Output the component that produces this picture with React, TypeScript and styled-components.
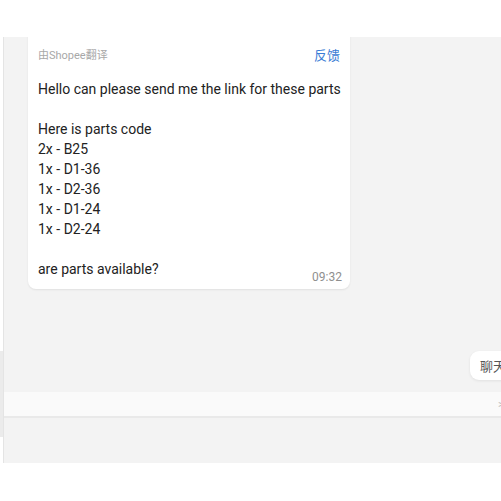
import React from "react";
import styled, { createGlobalStyle } from "styled-components";

const GlobalStyle = createGlobalStyle`
  html, body { margin: 0; padding: 0; background: #ffffff; }
  body { font-family: Roboto, "Noto Sans CJK SC", "Liberation Sans", sans-serif; }
`;

const Page = styled.div`
  width: 501px;
  height: 501px;
  display: flex;
  flex-direction: column;
  background: #ffffff;
  overflow: hidden;
`;

const TopBar = styled.div`
  height: 37px;
  flex: none;
  background: #ffffff;
`;

const Body = styled.div`
  display: flex;
  height: 426px;
  flex: none;
`;

const LeftRail = styled.div`
  width: 3px;
  flex: none;
  display: flex;
  flex-direction: column;
  padding-top: 314px;
`;

const RailMark = styled.div`
  height: 86px;
  background: #ebebeb;
`;

const ChatPanel = styled.div`
  flex: 1;
  display: flex;
  flex-direction: column;
  background: #f3f3f3;
  border-left: 1px solid #e4e4e4;
  overflow: hidden;
`;

const MessageArea = styled.div`
  height: 314px;
  flex: none;
  display: flex;
  flex-direction: column;
  justify-content: flex-end;
  overflow: hidden;
  padding: 0 0 62px 24px;
  box-sizing: border-box;
`;

const Bubble = styled.div`
  width: 322px;
  flex: none;
  box-sizing: border-box;
  background: #ffffff;
  border-radius: 8px;
  box-shadow: 0 1px 2px rgba(0, 0, 0, 0.08);
  padding: 10px 9px 5px 10px;
  display: flex;
  flex-direction: column;
`;

const Original = styled.div`
  font-size: 14px;
  line-height: 20px;
  color: #222222;
  white-space: pre;
`;

const TranslateRow = styled.div`
  margin-top: 4px;
  height: 16px;
  display: flex;
  align-items: center;
  justify-content: space-between;
`;

const TranslateLabel = styled.span`
  font-size: 11px;
  color: #a8a8a8;
`;

const Feedback = styled.span`
  font-size: 13px;
  color: #3a7bd5;
  margin-right: 1px;
`;

const MessageText = styled.div`
  margin-top: 17px;
  display: flex;
  flex-direction: column;
`;

const Line = styled.div`
  height: 20px;
  font-size: 14px;
  line-height: 20px;
  color: #222222;
  white-space: pre;
`;

const LastRow = styled.div`
  display: flex;
  justify-content: space-between;
  align-items: flex-start;
`;

const LastLine = styled.span`
  font-size: 14px;
  line-height: 20px;
  color: #222222;
  white-space: pre;
`;

const Time = styled.span`
  margin-top: 11px;
  font-size: 12px;
  line-height: 14px;
  color: #8f8f8f;
  margin-right: -1px;
`;

const ChipRow = styled.div`
  height: 29px;
  flex: none;
  display: flex;
  padding-left: 466px;
`;

const Chip = styled.div`
  flex: none;
  height: 29px;
  display: flex;
  align-items: center;
  padding: 0 10px;
  background: #ffffff;
  border-radius: 9px;
  box-shadow: 0 1px 3px rgba(0, 0, 0, 0.08);
  font-size: 13px;
  color: #555555;
  white-space: nowrap;
`;

const InputStrip = styled.div`
  margin-top: 12px;
  height: 24px;
  flex: none;
  background: #fafafa;
  border-bottom: 2px solid #e9e9e9;
  display: flex;
  align-items: center;
  padding-left: 494px;
  overflow: hidden;
`;

const StripHint = styled.span`
  font-size: 11px;
  color: #bdbdbd;
  white-space: nowrap;
`;

const messageLines = [
  "Hello can please send me the link for these parts",
  "",
  "Here is parts code",
  "2x - B25",
  "1x - D1-36",
  "1x - D2-36",
  "1x - D1-24",
  "1x - D2-24",
  "",
];

export default function App() {
  return (
    <>
      <GlobalStyle />
      <Page>
        <TopBar />
        <Body>
          <LeftRail>
            <RailMark />
          </LeftRail>
          <ChatPanel>
            <MessageArea>
              <Bubble>
                <Original>1x - D2-24</Original>
                <TranslateRow>
                  <TranslateLabel>由Shopee翻译</TranslateLabel>
                  <Feedback>反馈</Feedback>
                </TranslateRow>
                <MessageText>
                  {messageLines.map((l, i) => (
                    <Line key={i}>{l}</Line>
                  ))}
                </MessageText>
                <LastRow>
                  <LastLine>are parts available?</LastLine>
                  <Time>09:32</Time>
                </LastRow>
              </Bubble>
            </MessageArea>
            <ChipRow>
              <Chip>聊天记录</Chip>
            </ChipRow>
            <InputStrip>
              <StripHint>&gt;</StripHint>
            </InputStrip>
          </ChatPanel>
        </Body>
      </Page>
    </>
  );
}
